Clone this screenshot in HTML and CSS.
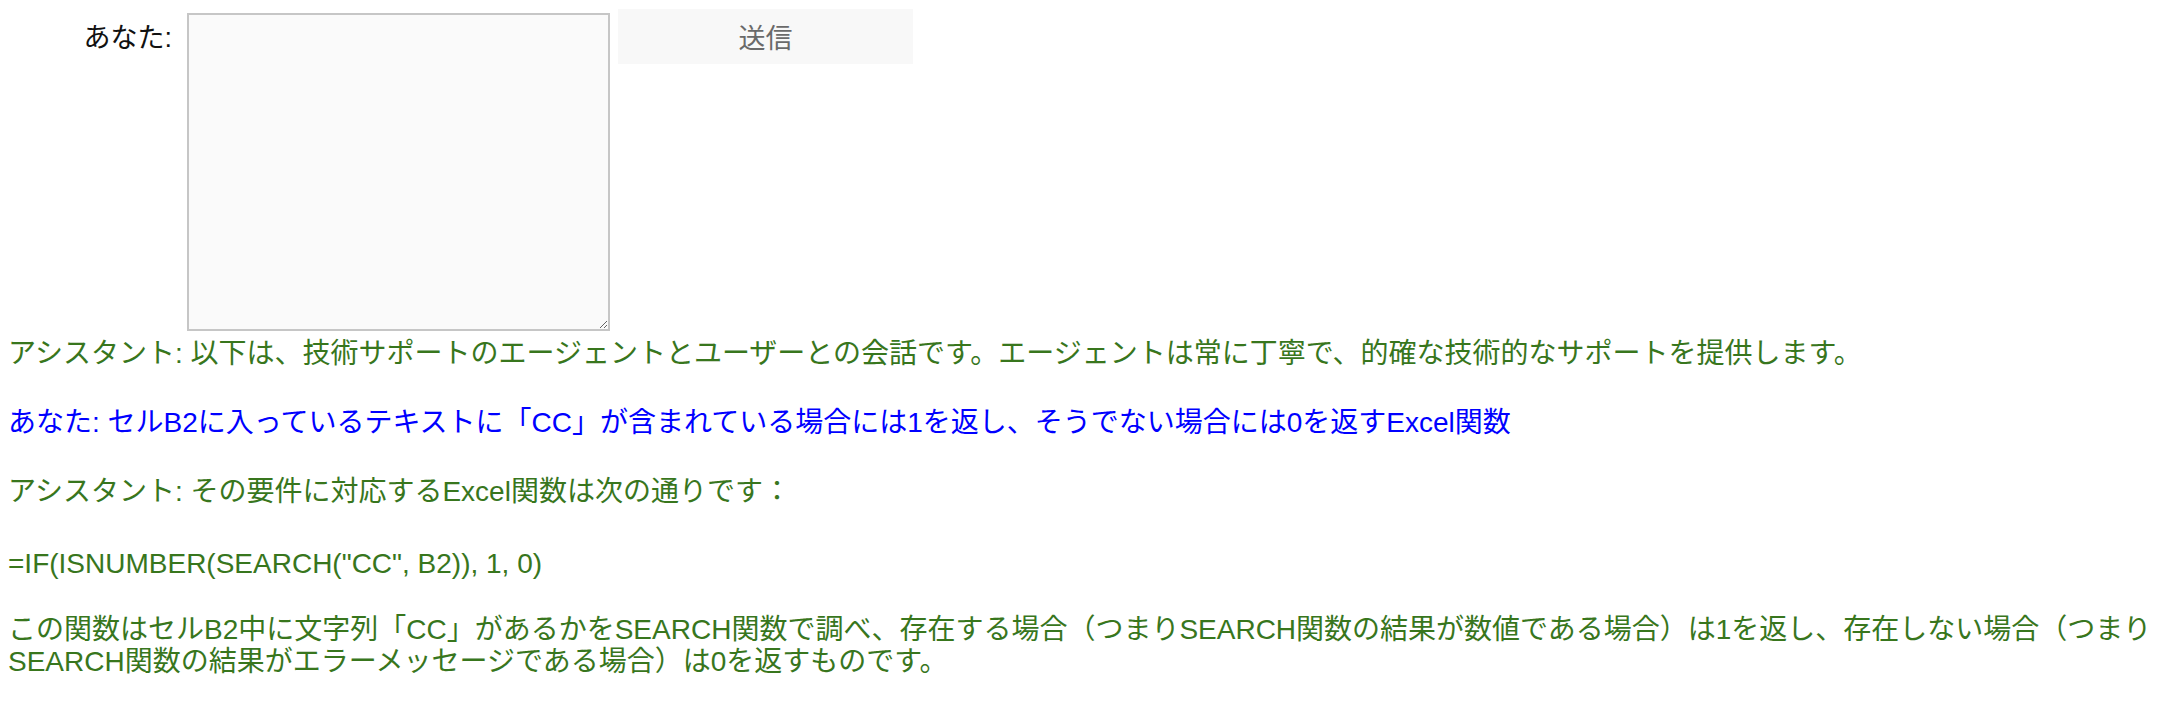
FILE: index.html
```html
<!DOCTYPE html>
<html lang="ja">
<head>
	<meta charset="UTF-8">
	<title>チャット</title>
	<link rel="stylesheet" href="styles.css">
</head>
<body>

	<form class="compose">
		<label class="who" for="msg">あなた:</label>
		<textarea id="msg" class="box"></textarea>
		<button type="button" class="send">送信</button>
	</form>

	<div class="log">
		<p class="bot">アシスタント: 以下は、技術サポートのエージェントとユーザーとの会話です。エージェントは常に丁寧で、的確な技術的なサポートを提供します。</p>
		<p class="user">あなた: セルB2に入っているテキストに「CC」が含まれている場合には1を返し、そうでない場合には0を返すExcel関数</p>
		<div class="bot">
			<p>アシスタント: その要件に対応するExcel関数は次の通りです：</p>
			<p class="code">=IF(ISNUMBER(SEARCH("CC", B2)), 1, 0)</p>
			<p>この関数はセルB2中に文字列「CC」があるかをSEARCH関数で調べ、存在する場合（つまりSEARCH関数の結果が数値である場合）は1を返し、存在しない場合（つまりSEARCH関数の結果がエラーメッセージである場合）は0を返すものです。</p>
		</div>
	</div>

</body>
</html>
```

FILE: styles.css
```css
body {
	margin: 8px;
	font-family: "Liberation Sans", "Noto Sans CJK JP", sans-serif;
	font-size: 28px;
	line-height: 32px;
	color: #000;
	background: #fff;
}

/* 入力欄 */
.compose {
	display: flex;
	align-items: flex-start;
	margin: 0;
}

.who {
	width: 164px;
	margin-top: 14px;
	margin-right: 15px;
	text-align: right;
	font-size: 27px;
	color: #111;
}

.box {
	box-sizing: border-box;
	width: 423px;
	height: 318px;
	margin: 5px 0 0 0;
	border: 2px solid #c6c6c6;
	background-color: #fafafa;
	font: inherit;
}

.send {
	width: 295px;
	height: 55px;
	margin: 1px 0 0 8px;
	border: none;
	background-color: #f8f8f8;
	color: #6a6a6a;
	font-family: inherit;
	font-size: 27px;
	cursor: pointer;
}

/* 会話ログ */
.log {
	margin-top: 7px;
}

.log p {
	margin: 0 0 37px 0;
}

.log .code {
	padding-top: 3px;
	margin-bottom: 34px;
}

.bot {
	color: #38761d;
}

.user {
	color: #0000ff;
}
```
